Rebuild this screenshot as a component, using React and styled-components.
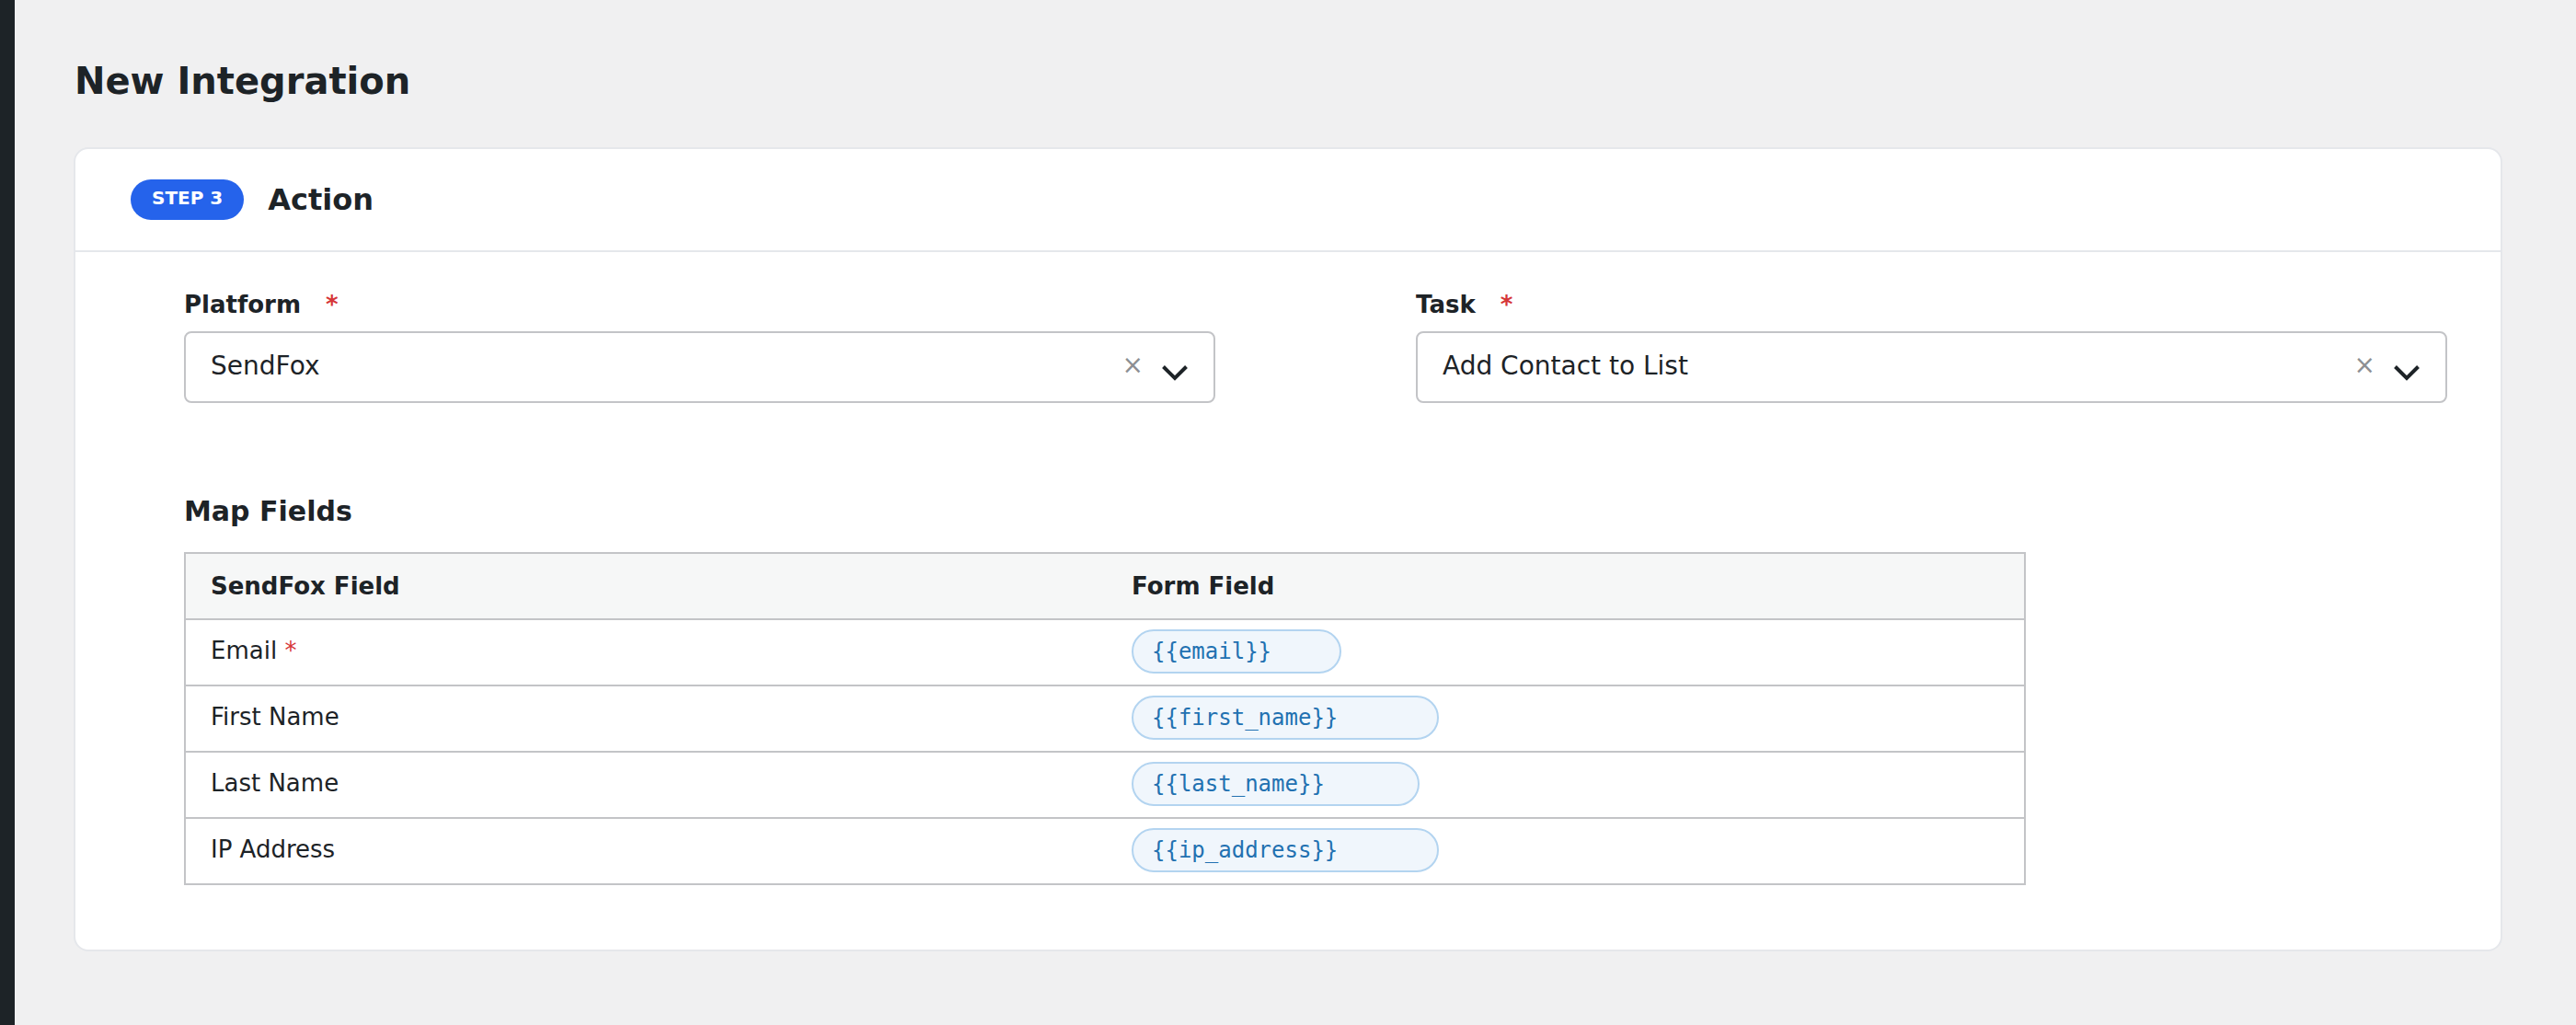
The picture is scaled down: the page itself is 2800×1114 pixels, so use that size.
import { useState } from "react";
import styled, { createGlobalStyle } from "styled-components";

const platforms = ["SendFox"];
const tasks = ["Add Contact to List"];

const fields = [
  { label: "Email", tag: "{{email}}", required: true },
  { label: "First Name", tag: "{{first_name}}" },
  { label: "Last Name", tag: "{{last_name}}" },
  { label: "IP Address", tag: "{{ip_address}}" },
];

const tagWidth = (tag) => Math.round(tag.length * 21.2 + 37);

function SelectField({ id, label, options }) {
  const [value, setValue] = useState(options[0]);

  return (
    <Field>
      <Label htmlFor={id}>
        {label}
        <Required>*</Required>
      </Label>
      <SelectBox>
        <Select id={id} value={value} onChange={(e) => setValue(e.target.value)}>
          <option value="" />
          {options.map((option) => (
            <option key={option} value={option}>
              {option}
            </option>
          ))}
        </Select>
        <ClearButton type="button" aria-label={`Clear ${label}`} onClick={() => setValue("")}>
          ×
        </ClearButton>
        <Chevron viewBox="0 0 28 18" aria-hidden="true">
          <path d="M1.5 2.5 14 15 26.5 2.5" />
        </Chevron>
      </SelectBox>
    </Field>
  );
}

export default function App() {
  return (
    <>
      <GlobalStyle />
      <Layout>
        <Sidebar />
        <Main>
          <PageTitle>New Integration</PageTitle>
          <Card>
            <CardHeader>
              <StepBadge>STEP 3</StepBadge>
              <CardTitle>Action</CardTitle>
            </CardHeader>
            <CardBody>
              <FieldsRow>
                <SelectField id="platform" label="Platform" options={platforms} />
                <SelectField id="task" label="Task" options={tasks} />
              </FieldsRow>

              <SectionTitle id="map-fields">Map Fields</SectionTitle>
              <Table aria-labelledby="map-fields">
                <thead>
                  <tr>
                    <HeadCell scope="col">SendFox Field</HeadCell>
                    <HeadCell scope="col">Form Field</HeadCell>
                  </tr>
                </thead>
                <tbody>
                  {fields.map((field) => (
                    <tr key={field.tag}>
                      <NameCell>
                        {field.label}
                        {field.required && <Mark> *</Mark>}
                      </NameCell>
                      <TagCell>
                        <Tag style={{ width: tagWidth(field.tag) }}>{field.tag}</Tag>
                      </TagCell>
                    </tr>
                  ))}
                </tbody>
              </Table>
            </CardBody>
          </Card>
        </Main>
      </Layout>
    </>
  );
}

const GlobalStyle = createGlobalStyle`
  * {
    box-sizing: border-box;
  }

  body {
    margin: 0;
    background: #f0f0f1;
    color: #1d2327;
    font-family: "DejaVu Sans", sans-serif;
  }
`;

const Layout = styled.div`
  display: flex;
  min-height: 100vh;
`;

const Sidebar = styled.aside`
  flex: 0 0 16px;
  background: #1d2327;
`;

const Main = styled.main`
  flex: 1;
  min-width: 0;
  padding: 64px 80px 80px 64px;
`;

const PageTitle = styled.h1`
  margin: 0 0 48px;
  padding-left: 1px;
  font-size: 40px;
  line-height: 48px;
  font-weight: 700;
`;

const Card = styled.section`
  background: #fff;
  border: 2px solid #e5e7eb;
  border-radius: 16px;
`;

const CardHeader = styled.header`
  display: flex;
  align-items: center;
  gap: 26px;
  height: 112px;
  padding: 0 60px;
  border-bottom: 2px solid #e5e7eb;
`;

const StepBadge = styled.span`
  height: 44px;
  padding: 0 23px;
  border-radius: 22px;
  background: #2563eb;
  color: #fff;
  font-size: 20px;
  line-height: 40px;
  font-weight: 700;
`;

const CardTitle = styled.h2`
  margin: 0;
  font-size: 32px;
  line-height: 40px;
  font-weight: 700;
`;

const CardBody = styled.div`
  padding: 40px 58px 70px 118px;
`;

const FieldsRow = styled.div`
  display: grid;
  grid-template-columns: 1fr 1fr;
  gap: 218px;
`;

const Field = styled.div`
  display: flex;
  flex-direction: column;
  gap: 12px;
`;

const Label = styled.label`
  font-size: 26px;
  line-height: 34px;
  font-weight: 700;
`;

const Required = styled.span`
  margin-left: 27px;
  color: #d63638;
`;

const SelectBox = styled.div`
  display: flex;
  align-items: center;
  height: 78px;
  padding-right: 28px;
  border: 2px solid #c3c4c7;
  border-radius: 8px;
  background: #fff;
`;

const Select = styled.select`
  flex: 1;
  height: 100%;
  min-width: 0;
  padding: 0 0 4px 27px;
  border: none;
  outline: none;
  appearance: none;
  background: transparent;
  color: inherit;
  font-family: inherit;
  font-size: 28px;
`;

const ClearButton = styled.button`
  padding: 0 0 4px;
  border: none;
  background: transparent;
  color: #8c8f94;
  font-family: inherit;
  font-size: 28px;
  line-height: 32px;
  cursor: pointer;
`;

const Chevron = styled.svg`
  width: 28px;
  height: 18px;
  margin: 12px 0 0 20px;
  fill: none;
  stroke: #1d2327;
  stroke-width: 4;
`;

const SectionTitle = styled.h3`
  margin: 100px 0 26px;
  font-size: 30px;
  line-height: 36px;
  font-weight: 700;
`;

const Table = styled.table`
  width: 82%;
  max-width: 2002px;
  table-layout: fixed;
  border-collapse: collapse;
  border: 2px solid #c3c4c7;
`;

const HeadCell = styled.th`
  height: 72px;
  padding: 0 27px;
  border-bottom: 2px solid #c3c4c7;
  background: #f6f7f7;
  font-size: 26px;
  line-height: 32px;
  font-weight: 700;
  text-align: left;

  & + & {
    padding-left: 29px;
  }
`;

const Cell = styled.td`
  height: 72px;
  border-bottom: 2px solid #c3c4c7;
  font-size: 26px;
  line-height: 32px;
`;

const NameCell = styled(Cell)`
  padding: 0 27px 4px;
`;

const TagCell = styled(Cell)`
  padding: 0 29px 2px;
`;

const Mark = styled.span`
  color: #d63638;
`;

const Tag = styled.code`
  display: block;
  height: 48px;
  padding: 0 20px;
  border: 2px solid #b3d4f0;
  border-radius: 24px;
  background: #f0f6fc;
  color: #2271b1;
  font-family: "DejaVu Sans Mono", monospace;
  font-size: 24px;
  line-height: 44px;
`;
